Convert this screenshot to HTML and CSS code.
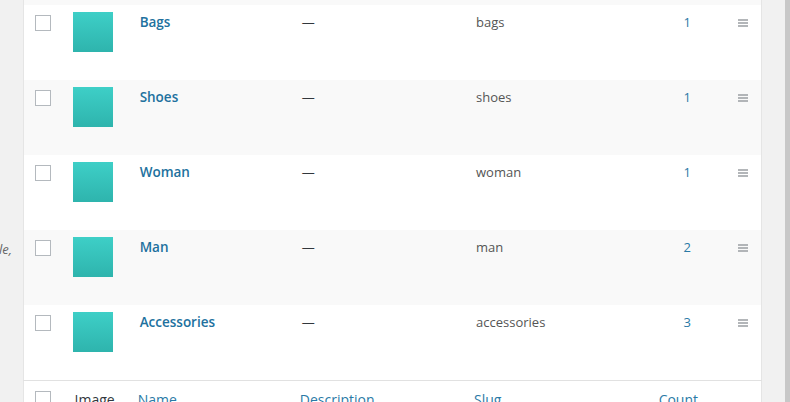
FILE: index.html
```html
<!DOCTYPE html>
<html lang="en">
<head>
<meta charset="utf-8">
<title>Product categories</title>
<link rel="stylesheet" href="styles.css">
</head>
<body>
<div class="page">
  <aside class="form-col">
    <p class="desc">le,</p>
  </aside>
  <main class="list-col">
    <table class="terms">
      <colgroup>
        <col class="c-cb"><col class="c-img"><col class="c-name"><col class="c-desc"><col class="c-slug"><col class="c-count"><col class="c-handle">
      </colgroup>
      <tbody>
        <tr class="alt tail"><td colspan="7"></td></tr>
        <tr>
          <td class="cb"><span class="box"></span></td>
          <td class="img"><span class="thumb"></span></td>
          <td class="name"><a href="#">Bags</a></td>
          <td class="dsc">—</td>
          <td class="slug">bags</td>
          <td class="count"><a href="#">1</a></td>
          <td class="handle"><svg class="grip" width="10" height="8" viewBox="0 0 10 8"><path d="M0 1h10M0 4h10M0 7h10"/></svg></td>
        </tr>
        <tr class="alt">
          <td class="cb"><span class="box"></span></td>
          <td class="img"><span class="thumb"></span></td>
          <td class="name"><a href="#">Shoes</a></td>
          <td class="dsc">—</td>
          <td class="slug">shoes</td>
          <td class="count"><a href="#">1</a></td>
          <td class="handle"><svg class="grip" width="10" height="8" viewBox="0 0 10 8"><path d="M0 1h10M0 4h10M0 7h10"/></svg></td>
        </tr>
        <tr>
          <td class="cb"><span class="box"></span></td>
          <td class="img"><span class="thumb"></span></td>
          <td class="name"><a href="#">Woman</a></td>
          <td class="dsc">—</td>
          <td class="slug">woman</td>
          <td class="count"><a href="#">1</a></td>
          <td class="handle"><svg class="grip" width="10" height="8" viewBox="0 0 10 8"><path d="M0 1h10M0 4h10M0 7h10"/></svg></td>
        </tr>
        <tr class="alt">
          <td class="cb"><span class="box"></span></td>
          <td class="img"><span class="thumb"></span></td>
          <td class="name"><a href="#">Man</a></td>
          <td class="dsc">—</td>
          <td class="slug">man</td>
          <td class="count"><a href="#">2</a></td>
          <td class="handle"><svg class="grip" width="10" height="8" viewBox="0 0 10 8"><path d="M0 1h10M0 4h10M0 7h10"/></svg></td>
        </tr>
        <tr>
          <td class="cb"><span class="box"></span></td>
          <td class="img"><span class="thumb"></span></td>
          <td class="name"><a href="#">Accessories</a></td>
          <td class="dsc">—</td>
          <td class="slug">accessories</td>
          <td class="count"><a href="#">3</a></td>
          <td class="handle"><svg class="grip" width="10" height="8" viewBox="0 0 10 8"><path d="M0 1h10M0 4h10M0 7h10"/></svg></td>
        </tr>
      </tbody>
      <tfoot>
        <tr>
          <th class="cb"><span class="box"></span></th>
          <th class="img-h">Image</th>
          <th class="sortable"><a href="#">Name</a></th>
          <th class="sortable"><a href="#">Description</a></th>
          <th class="sortable"><a href="#">Slug</a></th>
          <th class="sortable count-h"><a href="#">Count</a></th>
          <th></th>
        </tr>
      </tfoot>
    </table>
  </main>
  <div class="scrollbar"></div>
</div>
</body>
</html>
```

FILE: styles.css
```css
* { box-sizing: border-box; }
html, body { margin: 0; padding: 0; }
body {
  background: #f1f1f1;
  font-family: "Open Sans", "Liberation Sans", sans-serif;
  font-size: 13px;
  color: #444;
  overflow: hidden;
  height: 402px;
}
a { color: #2a7aa6; text-decoration: none; }

.page {
  display: flex;
  height: 402px;
}
.form-col {
  width: 23px;
  flex: none;
  overflow: hidden;
}
.desc {
  margin: 240px 0 0 -1px;
  font-style: italic;
  color: #666;
  font-size: 13px;
  white-space: nowrap;
}
.list-col {
  width: 739px;
  flex: none;
}
.scrollbar {
  margin-left: auto;
  width: 5px;
  background: #c8c8c8;
}

.terms {
  width: 739px;
  table-layout: fixed;
  border-collapse: collapse;
  background: #fff;
  border-left: 1px solid #e5e5e5;
  border-right: 1px solid #e5e5e5;
}
.c-cb { width: 39px; }
.c-img { width: 67px; }
.c-name { width: 162px; }
.c-desc { width: 174px; }
.c-slug { width: 184px; }
.c-count { width: 74px; }
.c-handle { width: 37px; }

.terms tbody tr { height: 75px; background: #fff; }
.terms tbody tr.alt { background: #f9f9f9; }
.terms tbody tr.tail { height: 5px; }
.terms tbody tr.tail td { padding: 0; height: 5px; }
.terms td {
  vertical-align: top;
  padding: 8px 10px;
  line-height: 19px;
}
.terms td.cb { padding: 10px 0 0 11px; }
.box {
  display: block;
  width: 16px;
  height: 16px;
  border: 1px solid #b4b9be;
  background: #fff;
}
.terms td.img { padding: 7px 10px 0; }
.thumb {
  display: block;
  width: 40px;
  height: 40px;
  background: linear-gradient(#3ecfc7, #2eb4ad);
}
.name a { font-weight: 600; font-size: 13.5px; color: #21719e; }
.dsc { color: #32373c; }
.slug { color: #555; }
.count { text-align: center; }
.terms td.handle { padding: 14px 0 0 14px; line-height: 0; }
.grip { display: block; }
.grip path { stroke: #9a9ea3; stroke-width: 1.3; fill: none; }

.terms tfoot tr { border-top: 1px solid #e1e1e1; background: #fff; }
.terms th {
  font-weight: 400;
  font-size: 14px;
  text-align: left;
  vertical-align: top;
  padding: 9px 10px;
  line-height: 20px;
  color: #32373c;
}
.terms th.cb { padding: 10px 0 0 11px; }
.terms th.img-h { padding-left: 12px; }
.terms th.sortable { padding: 9px 0 9px 8px; }
.terms th.count-h { padding: 9px 0; text-align: center; }
.terms th.count-h a::after {
  content: "";
  display: inline-block;
  width: 18px;
}
```
